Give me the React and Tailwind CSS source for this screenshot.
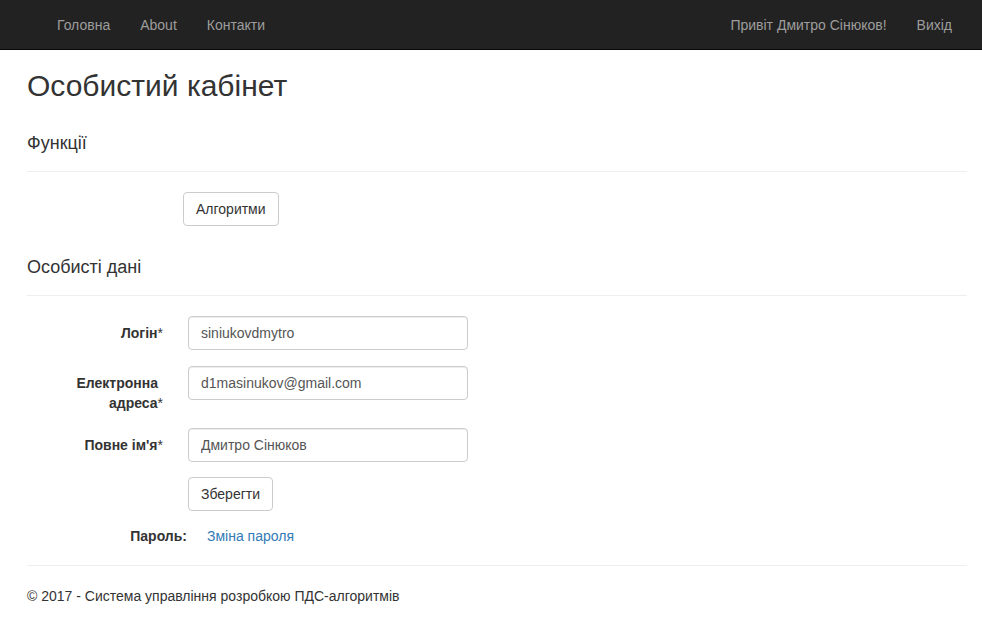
import React from 'react';

const navLink = 'block px-[15px] py-[15px] leading-5 text-[#9d9d9d] hover:text-white';
const inputCls =
    'block w-[280px] h-[34px] px-3 py-1.5 text-[14px] leading-5 text-[#555] bg-white border border-[#ccc] rounded-[4px] shadow-[inset_0_1px_1px_rgba(0,0,0,0.075)] outline-none';
const btnCls =
    'inline-block h-[34px] px-3 py-1.5 text-[14px] leading-5 text-[#333] bg-white border border-[#ccc] rounded-[4px]';

const Star = () => <span className="font-normal mr-[-5px]">*</span>;

const Field = ({ label, value, className = '' }) => (
    <div className={`flex items-start ${className}`}>
        <label className="w-[131px] pt-[7px] text-right font-bold leading-5">
            {label}
            <Star />
        </label>
        <div className="ml-[30px]">
            <input className={inputCls} defaultValue={value} />
        </div>
    </div>
);

const App = () => {
    return (
        <div className="min-h-screen bg-white font-['Liberation_Sans',Arial,sans-serif] text-[14px] leading-5 text-[#333]">
            {/* Navbar */}
            <nav className="h-[50px] bg-[#222] border-b border-[#080808] flex justify-between pl-[42px] pr-[15px]">
                <ul className="flex">
                    <li><a href="#" className={navLink}>Головна</a></li>
                    <li><a href="#" className={navLink}>About</a></li>
                    <li><a href="#" className={navLink}>Контакти</a></li>
                </ul>
                <ul className="flex">
                    <li><a href="#" className={navLink}>Привіт Дмитро Сінюков!</a></li>
                    <li><a href="#" className={navLink}>Вихід</a></li>
                </ul>
            </nav>

            <div className="pl-[27px] pr-[15px]">
                <h2 className="mt-[19px] text-[30px] leading-[33px]">Особистий кабінет</h2>

                {/* Functions */}
                <h4 className="mt-[31px] text-[18px] leading-5">Функції</h4>
                <hr className="mt-[18px] border-0 border-t border-[#eee]" />
                <div className="mt-5 pl-[156px]">
                    <button className={btnCls}>Алгоритми</button>
                </div>

                {/* Personal data */}
                <h4 className="mt-[31px] text-[18px] leading-5">Особисті дані</h4>
                <hr className="mt-[18px] border-0 border-t border-[#eee]" />

                <form className="mt-5" onSubmit={(e) => e.preventDefault()}>
                    <Field label="Логін" value="siniukovdmytro" />
                    <Field className="mt-4" label={<>Електронна<br />адреса</>} value="d1masinukov@gmail.com" />
                    <Field className="mt-[15px]" label="Повне ім'я" value="Дмитро Сінюков" />
                    <div className="mt-[15px] pl-[161px]">
                        <button className={btnCls}>Зберегти</button>
                    </div>
                </form>

                <dl className="mt-[15px] flex">
                    <dt className="w-[160px] text-right font-bold">Пароль:</dt>
                    <dd className="ml-5">
                        <a href="#" className="text-[#337ab7] hover:underline">Зміна пароля</a>
                    </dd>
                </dl>

                {/* Footer */}
                <hr className="mt-[19px] border-0 border-t border-[#eee]" />
                <footer className="mt-5">
                    <p>© 2017 - Система управління розробкою ПДС-алгоритмів</p>
                </footer>
            </div>
        </div>
    );
};

export default App;
